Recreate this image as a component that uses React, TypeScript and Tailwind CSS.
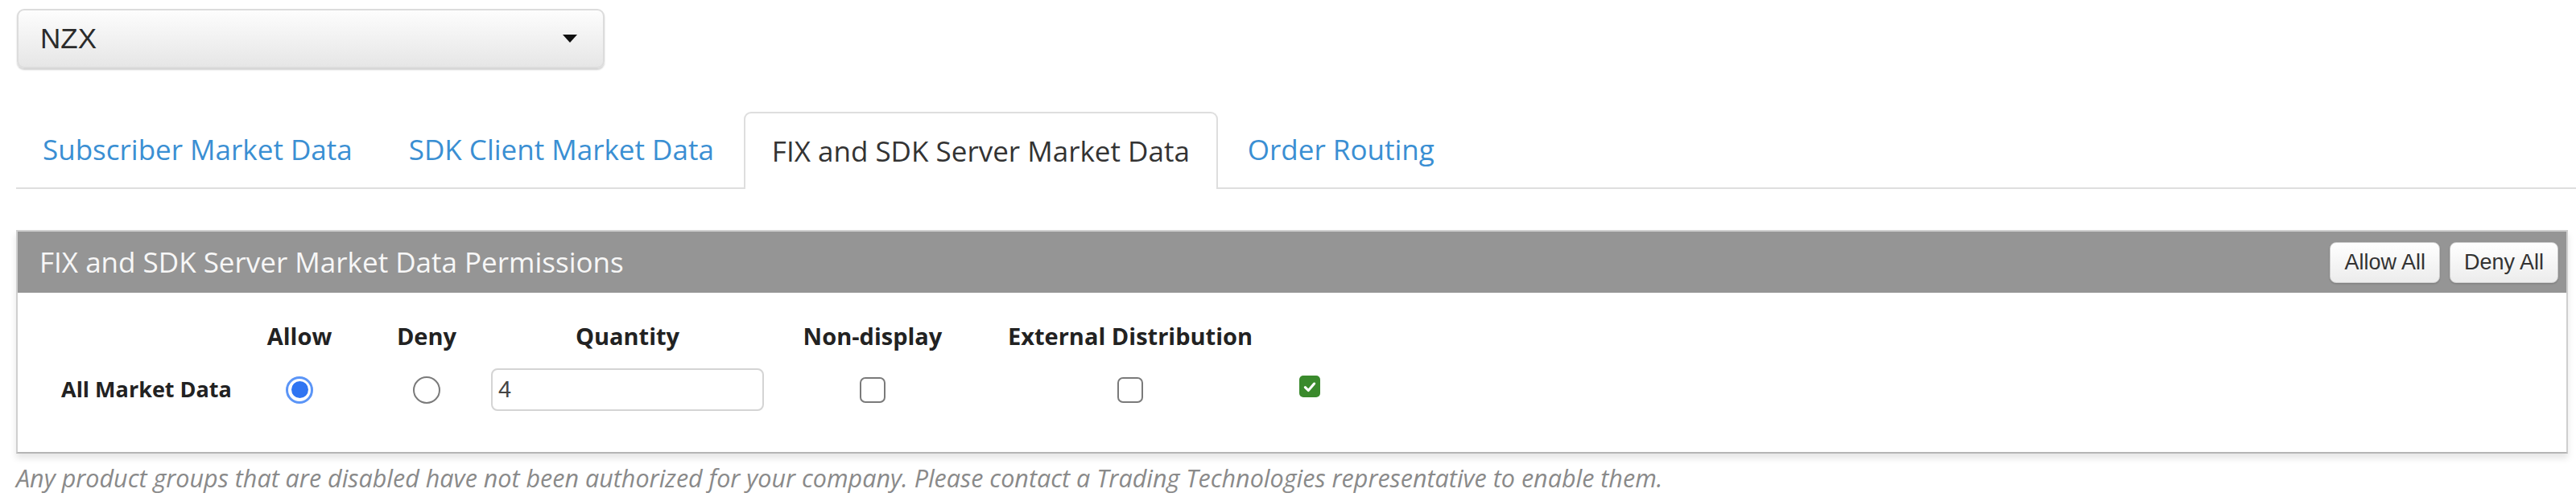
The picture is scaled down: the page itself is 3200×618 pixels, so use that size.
import React from 'react'

const sans = "font-['Open_Sans',sans-serif]"
const arial = "font-['Liberation_Sans',Arial,sans-serif]"

// column widths and spacing for the permissions grid (header and row share them)
const cols = [
  'w-[212px]',
  'ml-[43px] w-[82px]',
  'ml-[78px] w-[78px]',
  'ml-[41px] w-[339px]',
  'ml-[45px] w-[180px]',
  'ml-[75px] w-[310px]',
  'ml-[55px] w-[26px]',
]

const headers = ['', 'Allow', 'Deny', 'Quantity', 'Non-display', 'External Distribution', '']

const tabs = [
  { label: 'Subscriber Market Data', active: false },
  { label: 'SDK Client Market Data', active: false },
  { label: 'FIX and SDK Server Market Data', active: true },
  { label: 'Order Routing', active: false },
]

function Radio({ checked }: { checked: boolean }) {
  if (checked) {
    return (
      <div className="w-[34px] h-[34px] rounded-full border-[3px] border-[#5b95f7] bg-white flex items-center justify-center">
        <div className="w-[21px] h-[21px] rounded-full bg-[#2f74f2]" />
      </div>
    )
  }
  return <div className="w-[34px] h-[34px] rounded-full border-2 border-[#7a7a7a] bg-white" />
}

function Checkbox() {
  return <div className="w-[32px] h-[32px] rounded-[7px] border-2 border-[#7a7a7a] bg-white" />
}

function GreenCheck() {
  return (
    <div className="w-[27px] h-[27px] rounded-[5px] bg-[#3a8a2c] flex items-center justify-center -mt-[8px]">
      <svg viewBox="0 0 16 16" className="w-[18px] h-[18px]">
        <path d="M3 8.5 L6.5 12 L13 4.5" fill="none" stroke="white" strokeWidth="2.8" strokeLinecap="round" strokeLinejoin="round" />
      </svg>
    </div>
  )
}

function SmallButton({ children }: { children: React.ReactNode }) {
  return (
    <button
      className={`${arial} h-[51px] px-[17px] rounded-[8px] border border-[#c8c8c8] bg-linear-to-b from-white to-[#ececec] text-[27px] text-[#333] shadow-[0_1px_2px_rgba(0,0,0,0.2)]`}
    >
      {children}
    </button>
  )
}

export default function App() {
  return (
    <div className="w-[3200px] h-[618px] bg-white overflow-hidden">
      <div className="pt-[11px] pl-[21px]">
        <div className="w-[730px] h-[74px] rounded-[9px] border-2 border-[#dcdcdc] bg-linear-to-b from-[#fdfdfd] to-[#e6e6e6] shadow-[0_2px_2px_rgba(0,0,0,0.18)] flex items-center justify-between pl-[27px] pr-[32px]">
          <span className={`${arial} text-[35px] text-[#2b2b2b]`}>NZX</span>
          <svg viewBox="0 0 18 10" className="w-[18px] h-[10px]">
            <polygon points="0,0 18,0 9,10" fill="#111" />
          </svg>
        </div>
      </div>

      <div className="mt-[54px] ml-[20px] flex items-end border-b-2 border-[#dedede]">
        {tabs.map((tab) => (
          <div
            key={tab.label}
            className={
              tab.active
                ? `${sans} -mb-[2px] mr-[4px] h-[96px] px-[33px] flex items-center rounded-t-[9px] border-2 border-b-0 border-[#dedede] bg-white text-[35px] text-[#333]`
                : `${sans} mr-[4px] h-[94px] px-[33px] flex items-center text-[35px] text-[#3a8fd3]`
            }
          >
            {tab.label}
          </div>
        ))}
      </div>

      <div className="mt-[51px] ml-[20px] w-[3170px] border-2 border-[#cfcfcf] border-b-[#b5b5b5] shadow-[0_6px_8px_rgba(0,0,0,0.10)]">
        <div className="h-[76px] bg-[#959595] flex items-center justify-between pl-[27px] pr-[10px]">
          <span className={`${sans} text-[35px] text-[#f7f7f7]`}>FIX and SDK Server Market Data Permissions</span>
          <div className="flex gap-[12px]">
            <SmallButton>Allow All</SmallButton>
            <SmallButton>Deny All</SmallButton>
          </div>
        </div>

        <div className={`${sans} pl-[54px] pt-[34px] pb-[51px] text-[#222] font-bold`}>
          <div className="flex h-[40px] items-center">
            {headers.map((h, i) => (
              <div key={i} className={`${cols[i]} shrink-0 text-center text-[29px] whitespace-nowrap`}>
                {h}
              </div>
            ))}
          </div>
          <div className="flex h-[53px] items-center mt-[20px]">
            <div className={`${cols[0]} shrink-0 text-[27px] whitespace-nowrap`}>All Market Data</div>
            <div className={`${cols[1]} shrink-0 flex justify-center`}>
              <Radio checked />
            </div>
            <div className={`${cols[2]} shrink-0 flex justify-center`}>
              <Radio checked={false} />
            </div>
            <div className={`${cols[3]} shrink-0`}>
              <input
                readOnly
                value="4"
                className={`${arial} w-full h-[53px] rounded-[8px] border-2 border-[#d4d4d4] px-[7px] text-[29px] font-normal text-[#444] outline-none`}
              />
            </div>
            <div className={`${cols[4]} shrink-0 flex justify-center`}>
              <Checkbox />
            </div>
            <div className={`${cols[5]} shrink-0 flex justify-center`}>
              <Checkbox />
            </div>
            <div className={`${cols[6]} shrink-0 flex justify-center`}>
              <GreenCheck />
            </div>
          </div>
        </div>
      </div>

      <p className={`${sans} mt-[8px] ml-[20px] text-[30.5px] italic text-[#8a8a8a] whitespace-nowrap`}>
        Any product groups that are disabled have not been authorized for your company. Please contact a Trading Technologies representative to enable them.
      </p>
    </div>
  )
}
